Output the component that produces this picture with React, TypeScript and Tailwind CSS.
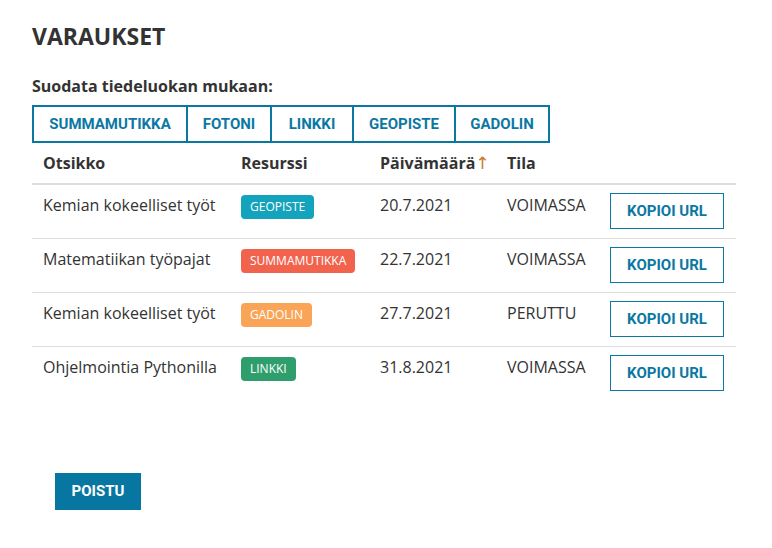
import React from 'react'

type Row = {
  title: string
  resource: string
  date: string
  status: string
}

const badgeColors: Record<string, string> = {
  GEOPISTE: 'bg-[#14a3bd]',
  SUMMAMUTIKKA: 'bg-[#f2634e]',
  GADOLIN: 'bg-[#f9a456]',
  LINKKI: 'bg-[#2f9e6d]',
}

const rows: Row[] = [
  { title: 'Kemian kokeelliset työt', resource: 'GEOPISTE', date: '20.7.2021', status: 'VOIMASSA' },
  { title: 'Matematiikan työpajat', resource: 'SUMMAMUTIKKA', date: '22.7.2021', status: 'VOIMASSA' },
  { title: 'Kemian kokeelliset työt', resource: 'GADOLIN', date: '27.7.2021', status: 'PERUTTU' },
  { title: 'Ohjelmointia Pythonilla', resource: 'LINKKI', date: '31.8.2021', status: 'VOIMASSA' },
]

// widths measured from the design, buttons overlap by their 2px border
const filters = [
  { label: 'SUMMAMUTIKKA', w: 'w-[156px]' },
  { label: 'FOTONI', w: 'w-[86px]' },
  { label: 'LINKKI', w: 'w-[84px]' },
  { label: 'GEOPISTE', w: 'w-[104px]' },
  { label: 'GADOLIN', w: 'w-[96px]' },
]

const App = () => {
  return (
    <div className="min-h-[548px] w-[772px] bg-white pl-8 pt-5 text-[#333] font-['Open_Sans',sans-serif]">
      <h1 className="text-[23px] leading-8 font-bold">VARAUKSET</h1>

      <p className="mt-[22px] text-base leading-6 font-bold">Suodata tiedeluokan mukaan:</p>

      <div className="mt-[7px] flex">
        {filters.map((f, i) => (
          <button
            key={f.label}
            className={`h-[38px] ${f.w} border-2 border-[#0b78a3] text-[15px] font-bold text-[#0b78a3] font-['Roboto',sans-serif] ${i > 0 ? '-ml-[2px]' : ''}`}
          >
            {f.label}
          </button>
        ))}
      </div>

      <table className="w-[704px] table-fixed border-collapse text-left">
        <thead>
          <tr className="border-b-2 border-[#dddddd]">
            <th className="w-[209px] pl-[11px] py-2 leading-6 font-bold">Otsikko</th>
            <th className="w-[139px] py-2 leading-6 font-bold">Resurssi</th>
            <th className="w-[127px] py-2 leading-6 font-bold">
              Päivämäärä<span className="font-normal text-[17px] text-[#c9792f] font-['DejaVu_Sans',sans-serif]">↑</span>
            </th>
            <th className="w-[103px] py-2 leading-6 font-bold">Tila</th>
            <th className="py-2"></th>
          </tr>
        </thead>
        <tbody>
          {rows.map((r, i) => (
            <tr key={i} className={i < rows.length - 1 ? 'border-b border-[#dddddd]' : ''}>
              <td className="pl-[11px] pt-2 pb-[9px] align-top leading-6 whitespace-nowrap">{r.title}</td>
              <td className="pt-2 pb-[9px] align-top">
                <span
                  className={`inline-flex h-6 items-center rounded px-[9px] text-xs text-white ${badgeColors[r.resource]}`}
                >
                  {r.resource}
                </span>
              </td>
              <td className="pt-2 pb-[9px] align-top leading-6">{r.date}</td>
              <td className="pt-2 pb-[9px] align-top leading-6">{r.status}</td>
              <td className="pt-2 pb-[9px] align-top">
                <button className="h-9 w-[114px] border border-[#0b78a3] text-[15px] font-bold text-[#0b78a3] font-['Roboto',sans-serif]">
                  KOPIOI URL
                </button>
              </td>
            </tr>
          ))}
        </tbody>
      </table>

      <button className="mt-[73px] ml-[23px] h-[37px] w-[86px] bg-[#0777a2] text-[15px] font-bold text-white font-['Roboto',sans-serif]">
        POISTU
      </button>
    </div>
  )
}

export default App
